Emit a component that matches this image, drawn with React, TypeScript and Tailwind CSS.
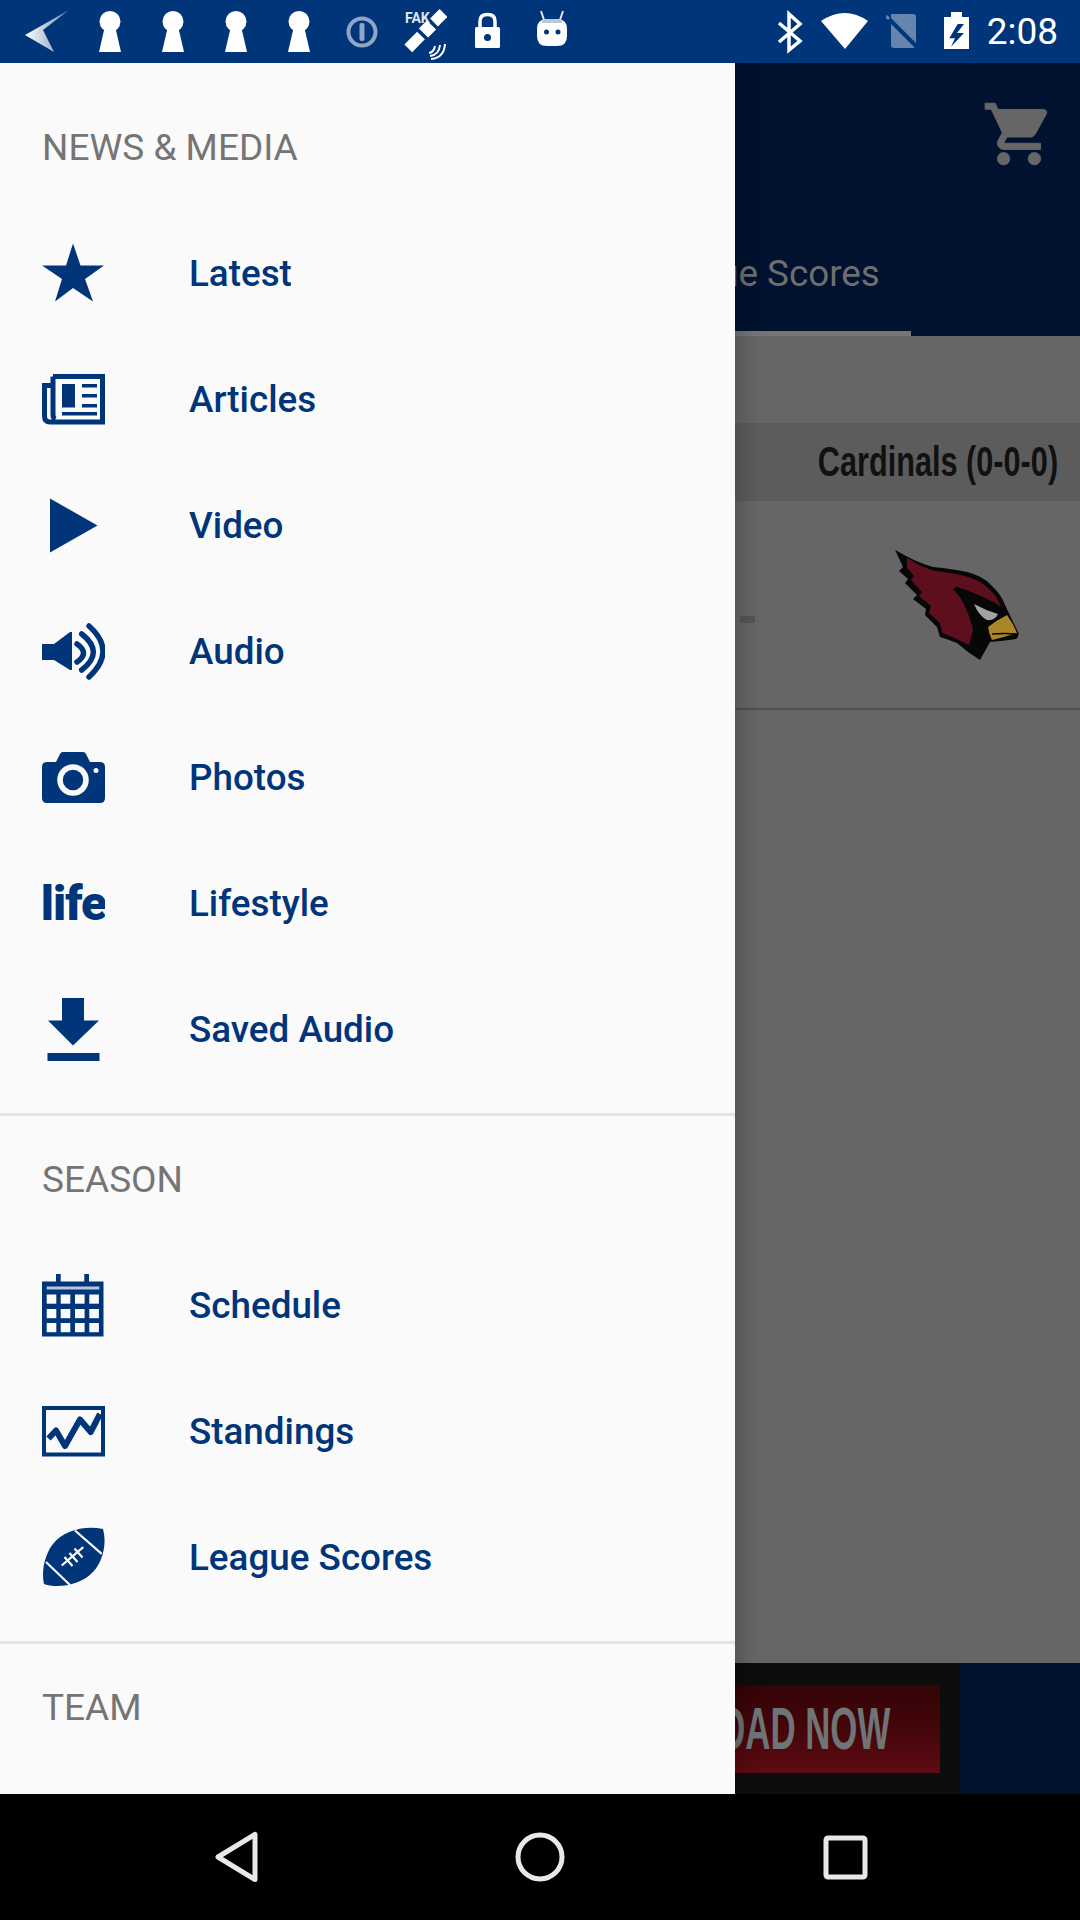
import type { ReactNode } from "react";

const NAVY = "#00357a";

function Icon({ children }: { children: ReactNode }) {
  return (
    <svg viewBox="0 0 63 63" fill={NAVY} className="w-[63px] h-[63px] shrink-0">
      {children}
    </svg>
  );
}

const StarIcon = () => (
  <Icon>
    <polygon points="31,1.5 38.5,23.5 62,23.5 43,37 51,59.5 31,46 13,59.5 20,37 0,23.5 24,23.5" />
  </Icon>
);

const ArticlesIcon = () => (
  <Icon>
    <path
      d="M11 8.500H60.500V54H8Q2.500 54 2.500 48V17.500H11M11 8.500V47Q11 50 13.500 51"
      fill="none"
      stroke={NAVY}
      strokeWidth="5"
    />
    <rect x="20" y="16" width="13" height="23.5" />
    <rect x="40" y="16" width="15" height="3.500" />
    <rect x="40" y="26" width="15" height="3.500" />
    <rect x="40" y="36" width="15" height="3.500" />
    <rect x="20" y="44" width="35" height="3.500" />
  </Icon>
);

const PlayIcon = () => (
  <Icon>
    <polygon points="8,4.5 55.5,31.5 8,58.5" />
  </Icon>
);

const AudioIcon = () => (
  <Icon>
    <polygon points="0,24 12,24 28,12 30,12 30,50 28,50 12,40 0,40" />
    <g fill="none" stroke={NAVY} strokeWidth="5.500" strokeLinecap="round">
      <path d="M35 24Q48 33 35 42" />
      <path d="M39.700 14Q63 32 39.700 50" />
      <path d="M47 6Q75 31 47 57" />
    </g>
  </Icon>
);

const CameraIcon = () => (
  <Icon>
    <path d="M5 16H14L18 8Q19 6 21 6H41Q43 6 44 8L48 16H58Q63 16 63 21V52Q63 57 58 57H5Q0 57 0 52V21Q0 16 5 16Z" />
    <circle cx="31" cy="34" r="13" fill="none" stroke="#fafafa" strokeWidth="5.5" />
    <circle cx="54" cy="24.5" r="2.5" fill="#fafafa" />
  </Icon>
);

const DownloadIcon = () => (
  <Icon>
    <polygon points="20,0 42,0 42,22.5 57,22.5 31,47.5 6,22.5 20,22.5" />
    <rect x="5.5" y="55" width="52" height="8" />
  </Icon>
);

const calendarCols = [4.7, 18.7, 33, 47.3];
const calendarRows = [20.5, 35, 49];

const CalendarIcon = () => (
  <Icon>
    <rect x="0" y="7.5" width="61.5" height="55" />
    <rect x="14" y="0" width="4.7" height="9" />
    <rect x="42.3" y="0" width="4.7" height="9" />
    <rect x="4.7" y="12.5" width="52.6" height="3" fill="#b8c6d8" />
    {calendarRows.map((y) =>
      calendarCols.map((x) => (
        <rect key={`${x}-${y}`} x={x} y={y} width="9.6" height="9.2" fill="#fafafa" />
      )),
    )}
  </Icon>
);

const StandingsIcon = () => (
  <Icon>
    <rect x="2" y="8" width="59" height="46.500" fill="none" stroke={NAVY} strokeWidth="4" />
    <polyline
      points="6.5,38.5 14,30.5 23,46 38,19.5 48.7,32 58,14"
      fill="none"
      stroke={NAVY}
      strokeWidth="6"
      strokeLinejoin="round"
    />
  </Icon>
);

const FootballIcon = () => (
  <Icon>
    <path d="M61 3C42 -1 21 5 11 18C3 28 -1 45 2 58C16 63 39 59 51 46C61 35 65 18 61 3Z" />
    <g stroke="#fafafa" strokeWidth="2.2" fill="none">
      <path d="M33 4.500L59.700 27.800" />
      <path d="M4 36L28 59" />
      <path d="M19.700 39.500L41.300 21.200" />
      <path d="M22.500 31L30.500 40M27.500 27L35.500 36M32.500 22.500L40.500 31.500" />
    </g>
  </Icon>
);

const LifeIcon = () => (
  <div className="w-[63px] h-[63px] shrink-0 pt-[2px] flex items-center justify-center overflow-hidden font-['Roboto',sans-serif] font-black text-[48px] leading-none tracking-[-1px] text-[#00357a]">
    life
  </div>
);

function MenuRow({ icon, label }: { icon: ReactNode; label: string }) {
  return (
    <div className="h-[126px] flex items-center pl-[42px] gap-[84px]">
      {icon}
      <span className="pt-[3px] font-['Roboto',sans-serif] font-medium text-[36.8px] leading-none text-[#00357a]">{label}</span>
    </div>
  );
}

function SectionTitle({ children }: { children: string }) {
  return (
    <div className="h-[126px] flex items-center pl-[42px] font-['Roboto',sans-serif] text-[37px] leading-none text-[#757575]">
      {children}
    </div>
  );
}

function Drawer() {
  return (
    <div className="absolute left-0 top-0 bottom-0 w-[735px] bg-[#fafafa] overflow-hidden shadow-[8px_0_18px_rgba(0,0,0,0.18)]">
      <div className="pt-[21px] pb-[21px] border-b-[3px] border-[#e4e4e4]">
        <SectionTitle>NEWS &amp; MEDIA</SectionTitle>
        <MenuRow icon={<StarIcon />} label="Latest" />
        <MenuRow icon={<ArticlesIcon />} label="Articles" />
        <MenuRow icon={<PlayIcon />} label="Video" />
        <MenuRow icon={<AudioIcon />} label="Audio" />
        <MenuRow icon={<CameraIcon />} label="Photos" />
        <MenuRow icon={<LifeIcon />} label="Lifestyle" />
        <MenuRow icon={<DownloadIcon />} label="Saved Audio" />
      </div>
      <div className="pb-[21px] border-b-[3px] border-[#e4e4e4]">
        <SectionTitle>SEASON</SectionTitle>
        <MenuRow icon={<CalendarIcon />} label="Schedule" />
        <MenuRow icon={<StandingsIcon />} label="Standings" />
        <MenuRow icon={<FootballIcon />} label="League Scores" />
      </div>
      <SectionTitle>TEAM</SectionTitle>
    </div>
  );
}

const Keyhole = () => (
  <svg viewBox="0 0 24 63" fill="#fff" className="w-[24px] h-[63px]">
    <circle cx="12" cy="21.5" r="10.5" />
    <polygon points="7,26 17,26 23,52 1,52" />
  </svg>
);

function StatusBar() {
  return (
    <div className="h-[63px] bg-[#00357a] flex items-center justify-between pl-[24px] pr-[22px] shrink-0">
      <div className="flex items-center">
        <svg viewBox="0 0 46 63" className="w-[46px] h-[63px] mr-[28px]">
          <defs>
            <linearGradient id="backFill" x1="0" y1="0" x2="1" y2="0">
              <stop offset="0" stopColor="#ffffff" />
              <stop offset="1" stopColor="#6d8bb4" />
            </linearGradient>
          </defs>
          <polygon points="1,35 45,10 19,30 30,52" fill="url(#backFill)" />
        </svg>
        <div className="flex items-center gap-[39px] mr-[35px]">
          <Keyhole />
          <Keyhole />
          <Keyhole />
          <Keyhole />
        </div>
        <svg viewBox="0 0 32 63" className="w-[32px] h-[63px] mr-[25px]">
          <circle cx="16" cy="32" r="13.5" fill="none" stroke="#8fa6c6" strokeWidth="4" />
          <rect x="13.5" y="23" width="5" height="18" rx="2" fill="#8fa6c6" />
        </svg>
        <svg viewBox="0 0 44 63" className="w-[44px] h-[63px] mr-[27px]">
          <text x="2" y="23" fill="#dfe6f0" fontFamily="Roboto, sans-serif" fontWeight="700" fontSize="14">
            FAK
          </text>
          <g stroke="#fff" fill="none">
            <path d="M5.3 48.3L18 35.5" strokeWidth="11" />
            <path d="M20.5 33L28.5 25" strokeWidth="13" />
            <path d="M31 22.5L40.5 13" strokeWidth="11" />
            <g strokeWidth="2">
              <path d="M26 53Q31 52 32 46" />
              <path d="M27 56Q36 55 37 45" />
              <path d="M28 59Q41 58 42 44" />
            </g>
          </g>
        </svg>
        <svg viewBox="0 0 27 63" className="w-[27px] h-[63px] mr-[34px]">
          <path d="M6 27V21Q6 14.500 13.500 14.500Q21 14.500 21 21V27" fill="none" stroke="#fff" strokeWidth="3.5" />
          <rect x="1" y="27" width="25" height="21" rx="1.500" fill="#fff" />
          <circle cx="13.500" cy="37.500" r="3.500" fill="#00357a" />
        </svg>
        <svg viewBox="0 0 34 63" className="w-[34px] h-[63px]">
          <path d="M9 20L6 11M25 20L28 11" stroke="#dfe6f0" strokeWidth="2" />
          <path d="M2 29Q2 19 12 19H22Q32 19 32 29V36Q32 46 22 46H12Q2 46 2 36Z" fill="#fff" />
          <path d="M7 21Q9 19 12 19H22Q25 19 27 21V23H7Z" fill="#b8c6d8" />
          <circle cx="11.500" cy="32" r="2.500" fill="#00357a" />
          <circle cx="23" cy="32" r="2.500" fill="#00357a" />
        </svg>
      </div>
      <div className="flex items-center">
        <svg viewBox="0 0 27 63" className="w-[27px] h-[63px] mr-[18px]">
          <path d="M3 23L24 41L13 50V14L24 24L3 42" fill="none" stroke="#fff" strokeWidth="3.500" />
        </svg>
        <svg viewBox="0 0 48 63" className="w-[48px] h-[63px] mr-[17px]">
          <path d="M0 21Q24 5 47 21L24 49Z" fill="#fff" />
        </svg>
        <svg viewBox="0 0 36 63" className="w-[36px] h-[63px] mr-[22px]">
          <path d="M5 14H27Q30 14 30 17V45Q30 48 27 48H8Q5 48 5 45Z" fill="#6685ae" />
          <path d="M2 18L33 49" stroke="#00357a" strokeWidth="4" />
          <path d="M0 16L3 19" stroke="#6685ae" strokeWidth="3" />
        </svg>
        <svg viewBox="0 0 25 63" className="w-[25px] h-[63px] mr-[18px]">
          <path d="M7 12H18V17H25V49H0V17H7Z" fill="#fff" />
          <polygon points="13.700,24 5.300,38.300 11,38.300 7,46.700 20,33 13,33 20,24" fill="#00357a" />
        </svg>
        <span className="font-['Roboto',sans-serif] text-[37px] text-white leading-none">2:08</span>
      </div>
    </div>
  );
}

function CardinalLogo() {
  return (
    <svg viewBox="0 0 125 111" className="w-[125px] h-[111px]">
      <path
        d="M0 0.700Q18 12 38 18Q58 20 72 23Q88 27 96 36Q106 45 110 56L123.500 84Q124 88 121 90Q108 92 95 93L85 111L73 103L62 94Q52 90 45 88L42 78L30 66L31 60L18 50L22 46L10 34L13 30L4 22L8 18Z"
        fill="#070707"
      />
      <path
        d="M12 9Q26 18 40 22Q58 24 70 27Q85 31 93 39Q102 47 106 58Q100 53 92 50Q76 42 62 38L58 40Q66 48 70 58Q76 70 78 81L74 96Q58 88 47 84L45 74L34 64L36 57L24 47L27 43L16 31L19 27L12 19Z"
        fill="#5d0f1e"
      />
      <path d="M79 55Q90 61 103 65Q100 72 92 71Q84 67 79 55Z" fill="#9fa3a5" />
      <path d="M93 78Q102 71 112 66Q118 74 122 84Q110 88 97 91Q94 85 93 78Z" fill="#a9862a" />
      <path d="M97 85Q110 84 121 85" stroke="#070707" strokeWidth="1.500" fill="none" />
    </svg>
  );
}

function Background() {
  return (
    <div className="h-full flex flex-col">
      <div className="bg-[#00122f] shrink-0">
        <div className="h-[147px] flex justify-end items-start pt-[34px] pr-[24px]">
          <svg viewBox="0 0 24 24" fill="#666666" stroke="#666666" strokeWidth="0.3" className="w-[74px] h-[74px]">
            <path d="M7 18c-1.100 0-1.990.9-1.990 2S5.900 22 7 22s2-.9 2-2-.9-2-2-2zM1 2v2h2l3.600 7.590-1.350 2.450c-.16.28-.25.61-.25.96 0 1.100.9 2 2 2h12v-2H7.420c-.14 0-.25-.11-.25-.25l.03-.12.9-1.630h7.450c.75 0 1.410-.41 1.750-1.030l3.580-6.470c.08-.14.12-.31.12-.48 0-.55-.45-1-1-1H5.210l-.94-2H1zm16 16c-1.100 0-1.990.9-1.990 2s.89 2 1.990 2 2-.9 2-2-.9-2-2-2z" />
          </svg>
        </div>
        <div className="h-[126px] pl-[603px]">
          <div className="w-[308px] h-full pt-[7px] pl-[4px] flex items-center justify-center border-b-[5px] border-[#757575] font-['Roboto',sans-serif] text-[36.8px] leading-none text-[#6e6e6e]">
            League Scores
          </div>
        </div>
      </div>
      <div className="flex-1 bg-[#666666] flex flex-col">
        <div className="mt-[87px] h-[78px] bg-[#5c5c5c] flex items-center justify-end pr-[22px]">
          <span className="origin-right scale-x-[0.73] pb-[2px] font-['Liberation_Sans',sans-serif] font-bold text-[42px] whitespace-nowrap text-[#111111]">
            Cardinals (0-0-0)
          </span>
        </div>
        <div className="h-[209px] border-b-[2px] border-[#505050] flex items-center pl-[740px]">
          <div className="w-[15px] h-[7px] mt-[30px] bg-[#555555]" />
          <div className="ml-[140px]">
            <CardinalLogo />
          </div>
        </div>
      </div>
      <div className="h-[131px] shrink-0 flex bg-[#00122f]">
        <div className="w-[960px] bg-[#0d0d0d] flex items-center justify-end pr-[20px]">
          <div className="w-[400px] h-[88px] bg-gradient-to-b from-[#340407] via-[#43060a] to-[#5e0c12] flex items-center justify-end pr-[50px] overflow-hidden">
            <span className="origin-right scale-x-[0.58] font-['Liberation_Sans',sans-serif] font-bold text-[60px] leading-none whitespace-nowrap text-[#6f7477]">
              DOWNLOAD NOW
            </span>
          </div>
        </div>
      </div>
    </div>
  );
}

function NavBar() {
  return (
    <div className="h-[126px] bg-black shrink-0 flex items-center pl-[214px] gap-[255px]">
      <svg viewBox="0 0 45 52" className="w-[45px] h-[52px]" fill="none" stroke="#e8e8e8" strokeWidth="5" strokeLinejoin="round">
        <polygon points="4,26 41,3.500 41,48.500" />
      </svg>
      <svg viewBox="0 0 52 52" className="w-[52px] h-[52px]" fill="none" stroke="#e8e8e8" strokeWidth="5">
        <circle cx="26" cy="26" r="22" />
      </svg>
      <svg viewBox="0 0 49 49" className="w-[49px] h-[49px]" fill="none" stroke="#e8e8e8" strokeWidth="5">
        <rect x="5" y="5" width="39" height="39" rx="2" />
      </svg>
    </div>
  );
}

export default function App() {
  return (
    <div className="w-[1080px] h-[1920px] flex flex-col overflow-hidden bg-black">
      <StatusBar />
      <div className="flex-1 relative overflow-hidden">
        <Background />
        <Drawer />
      </div>
      <NavBar />
    </div>
  );
}
